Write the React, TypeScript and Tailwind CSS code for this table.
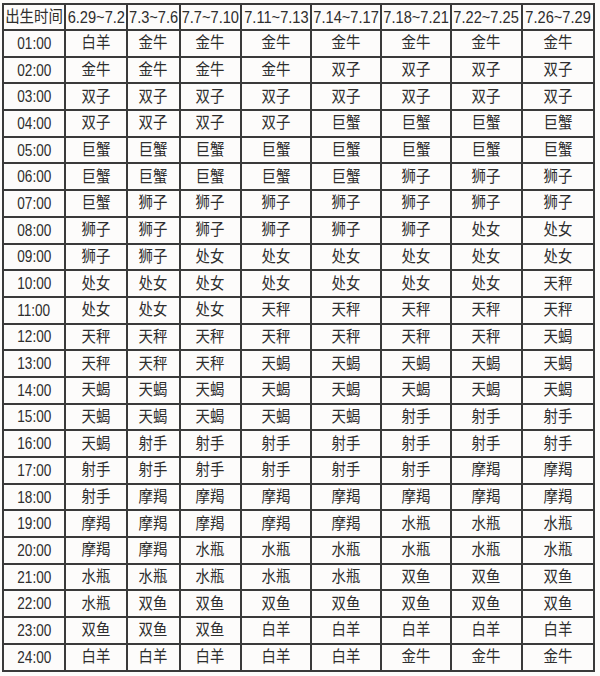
const header = ["出生时间", "6.29~7.2", "7.3~7.6", "7.7~7.10", "7.11~7.13", "7.14~7.17", "7.18~7.21", "7.22~7.25", "7.26~7.29"]

const widths = ["w-[62px]", "w-[62px]", "w-[53px]", "w-[61px]", "w-[70px]", "w-[70px]", "w-[70px]", "w-[71px]", "w-[72px]"]

const rows: string[][] = [
  ["白羊", "金牛", "金牛", "金牛", "金牛", "金牛", "金牛", "金牛"],
  ["金牛", "金牛", "金牛", "金牛", "双子", "双子", "双子", "双子"],
  ["双子", "双子", "双子", "双子", "双子", "双子", "双子", "双子"],
  ["双子", "双子", "双子", "双子", "巨蟹", "巨蟹", "巨蟹", "巨蟹"],
  ["巨蟹", "巨蟹", "巨蟹", "巨蟹", "巨蟹", "巨蟹", "巨蟹", "巨蟹"],
  ["巨蟹", "巨蟹", "巨蟹", "巨蟹", "巨蟹", "狮子", "狮子", "狮子"],
  ["巨蟹", "狮子", "狮子", "狮子", "狮子", "狮子", "狮子", "狮子"],
  ["狮子", "狮子", "狮子", "狮子", "狮子", "狮子", "处女", "处女"],
  ["狮子", "狮子", "处女", "处女", "处女", "处女", "处女", "处女"],
  ["处女", "处女", "处女", "处女", "处女", "处女", "处女", "天秤"],
  ["处女", "处女", "处女", "天秤", "天秤", "天秤", "天秤", "天秤"],
  ["天秤", "天秤", "天秤", "天秤", "天秤", "天秤", "天秤", "天蝎"],
  ["天秤", "天秤", "天秤", "天蝎", "天蝎", "天蝎", "天蝎", "天蝎"],
  ["天蝎", "天蝎", "天蝎", "天蝎", "天蝎", "天蝎", "天蝎", "天蝎"],
  ["天蝎", "天蝎", "天蝎", "天蝎", "天蝎", "射手", "射手", "射手"],
  ["天蝎", "射手", "射手", "射手", "射手", "射手", "射手", "射手"],
  ["射手", "射手", "射手", "射手", "射手", "射手", "摩羯", "摩羯"],
  ["射手", "摩羯", "摩羯", "摩羯", "摩羯", "摩羯", "摩羯", "摩羯"],
  ["摩羯", "摩羯", "摩羯", "摩羯", "摩羯", "水瓶", "水瓶", "水瓶"],
  ["摩羯", "摩羯", "水瓶", "水瓶", "水瓶", "水瓶", "水瓶", "水瓶"],
  ["水瓶", "水瓶", "水瓶", "水瓶", "水瓶", "双鱼", "双鱼", "双鱼"],
  ["水瓶", "双鱼", "双鱼", "双鱼", "双鱼", "双鱼", "双鱼", "双鱼"],
  ["双鱼", "双鱼", "双鱼", "白羊", "白羊", "白羊", "白羊", "白羊"],
  ["白羊", "白羊", "白羊", "白羊", "白羊", "金牛", "金牛", "金牛"],
]

// the source image is squeezed sideways, so text is narrowed a little
function Narrow({ text, kind }: { text: string; kind: "han" | "time" | "date" }) {
  const cls =
    kind === "date"
      ? "inline-block whitespace-nowrap text-[17px] leading-none scale-x-[0.86]"
      : kind === "time"
        ? "inline-block whitespace-nowrap text-[17px] leading-none scale-x-[0.8]"
        : "inline-block whitespace-nowrap text-[16px] leading-none scale-x-[0.9]"
  return (
    <div className="flex justify-center">
      <span className={cls}>{text}</span>
    </div>
  )
}

export default function App() {
  return (
    <div
      className="w-[600px] h-[676px] bg-[#fdfcfb] pt-[3px] pl-[2px] text-[#2e2e2e]"
      style={{ fontFamily: '"Liberation Sans", "Noto Sans CJK SC", sans-serif' }}
    >
      <table className="table-fixed border-collapse w-[593px]">
        <colgroup>
          {widths.map((w, i) => (
            <col key={i} className={w} />
          ))}
        </colgroup>
        <thead>
          <tr className="h-[26px]">
            {header.map((h, i) => (
              <th key={i} className="border-2 border-[#3a3a3a] p-0 font-normal">
                <Narrow text={h} kind={i > 0 ? "date" : "han"} />
              </th>
            ))}
          </tr>
        </thead>
        <tbody>
          {rows.map((row, r) => (
            <tr key={r} className="h-[26.7px]">
              <td className="border-2 border-[#3a3a3a] p-0">
                <Narrow text={`${String(r + 1).padStart(2, "0")}:00`} kind="time" />
              </td>
              {row.map((sign, c) => (
                <td key={c} className="border-2 border-[#3a3a3a] p-0">
                  <Narrow text={sign} kind="han" />
                </td>
              ))}
            </tr>
          ))}
        </tbody>
      </table>
    </div>
  )
}
